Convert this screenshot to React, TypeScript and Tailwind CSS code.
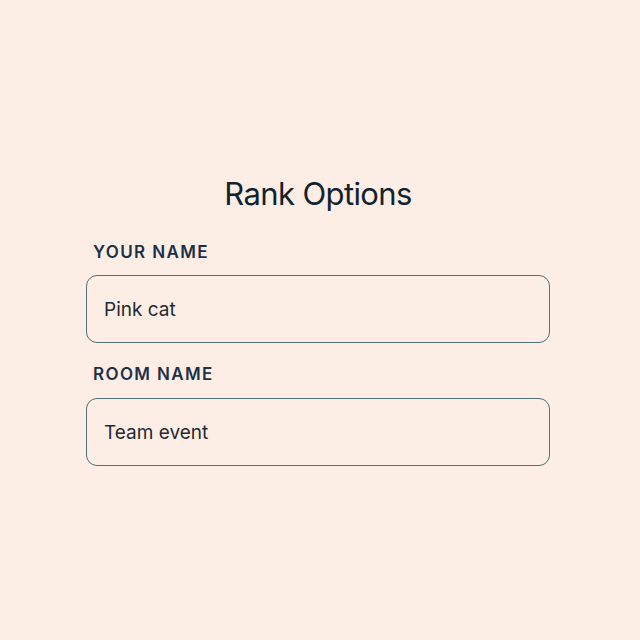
export default function App() {
  return (
    <div
      className="w-[640px] h-[640px] bg-[#fdeee5] flex flex-col items-center"
      style={{ fontFamily: "Inter, 'Noto Sans', sans-serif" }}
    >
      <div className="w-[464px] -ml-[4px] mt-[174px] flex flex-col">
        <h1 className="text-center text-[31px] leading-[40px] tracking-[-0.02em] text-[#10232e] font-normal">
          Rank Options
        </h1>
        <label className="mt-[28px] ml-[7px] text-[17px] leading-[20px] font-semibold tracking-[0.08em] text-[#1c3049]">
          YOUR NAME
        </label>
        <div className="mt-[13px] h-[68px] rounded-[11px] border-[1.5px] border-[#4f7076] flex items-center pl-[17px] pt-[3px] text-[19px] text-[#1e2a33]">
          Pink cat
        </div>
        <label className="mt-[21px] ml-[7px] text-[17px] leading-[20px] font-semibold tracking-[0.08em] text-[#1c3049]">
          ROOM NAME
        </label>
        <div className="mt-[14px] h-[68px] rounded-[11px] border-[1.5px] border-[#4f7076] flex items-center pl-[17px] pt-[3px] text-[19px] text-[#1e2a33]">
          Team event
        </div>
      </div>
    </div>
  );
}
